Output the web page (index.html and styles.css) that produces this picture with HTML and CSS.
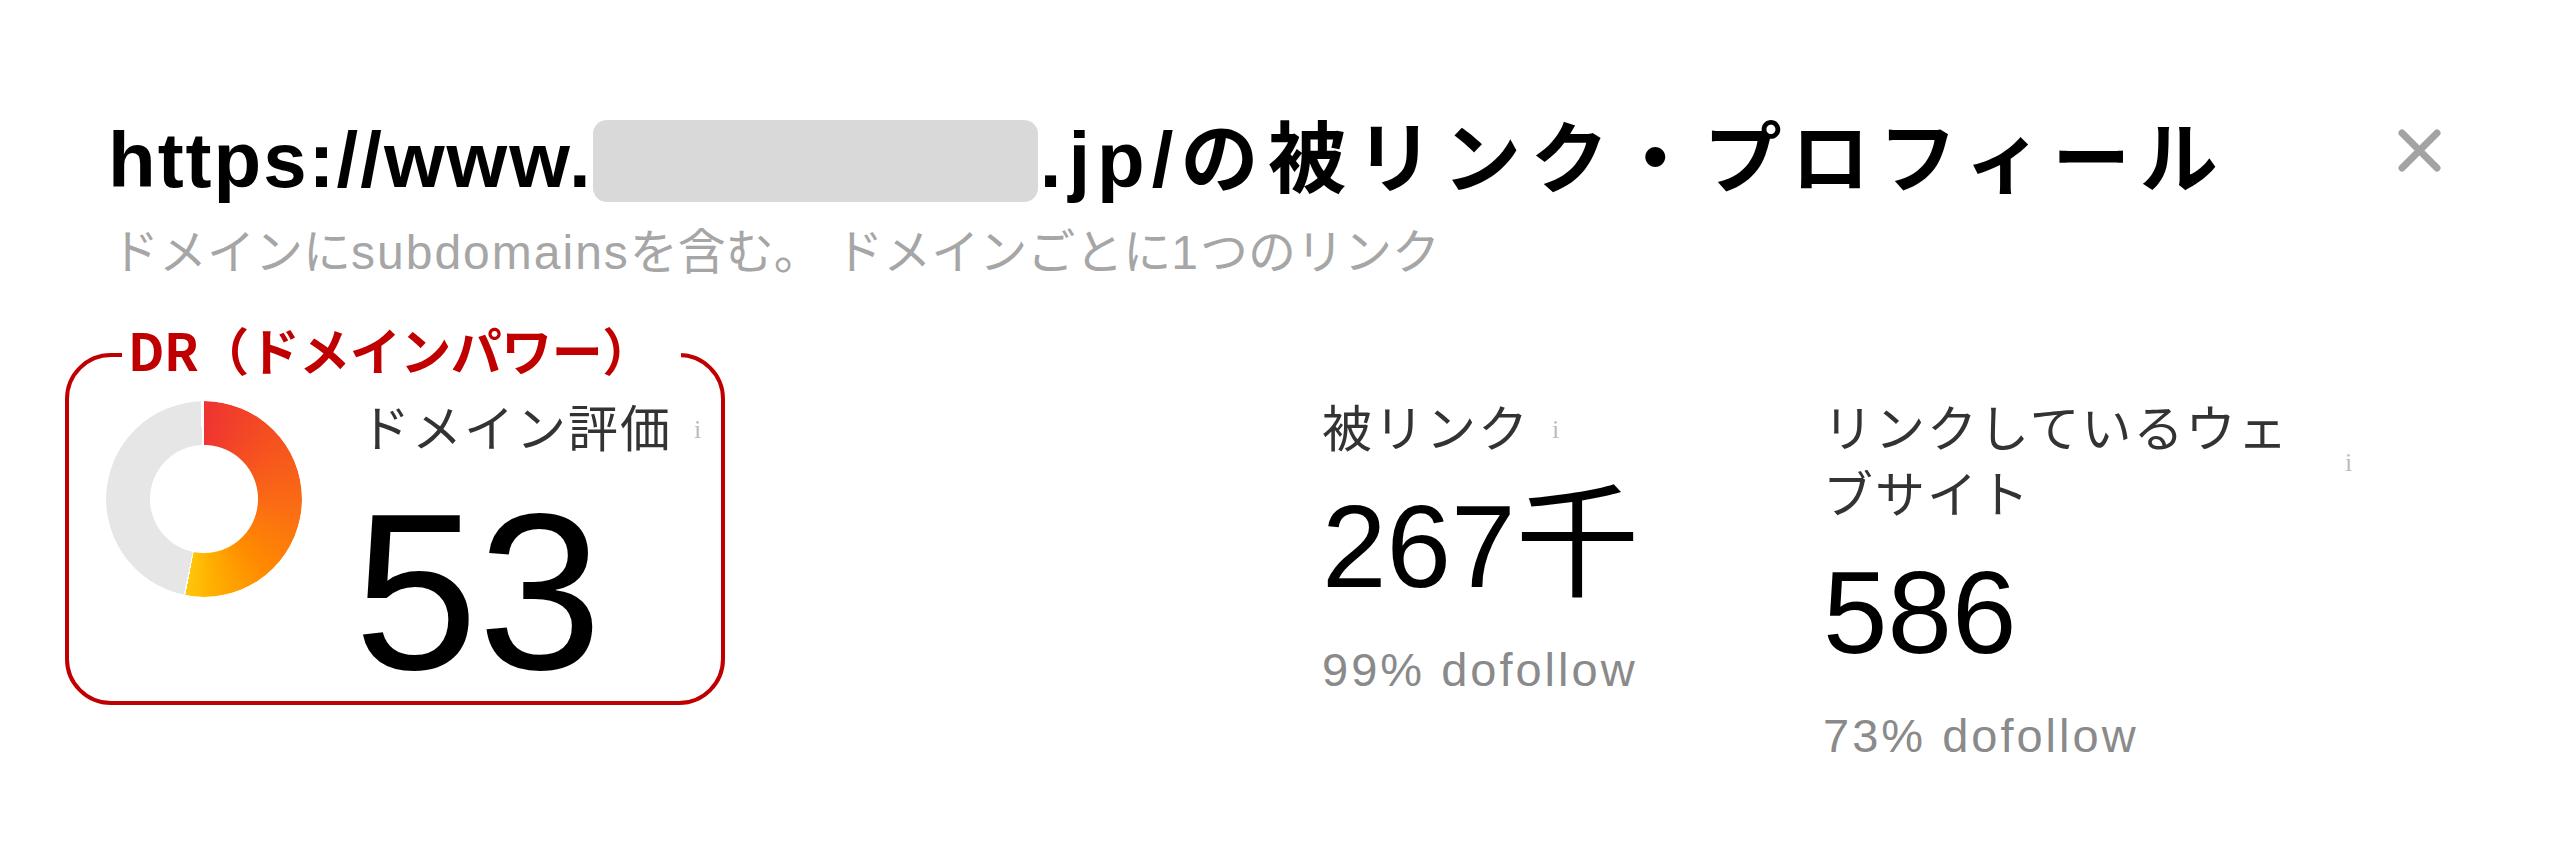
FILE: index.html
```html
<!DOCTYPE html>
<html lang="ja">
<head>
<meta charset="utf-8">
<title>被リンク・プロフィール</title>
<link rel="stylesheet" href="styles.css">
</head>
<body>
<div class="modal">
  <header class="head">
    <div class="titles">
      <h1 class="title"><span class="url">https://www.</span><span class="mask"></span><span class="url tld">.jp/</span><span class="jp">の被リンク・プロフィール</span></h1>
      <p class="sub">ドメインに<span class="lat">subdomains</span>を含む。 ドメインごとに<span class="lat">1</span>つのリンク</p>
    </div>
    <button class="close" aria-label="閉じる">
      <svg viewBox="0 0 45 45" width="45" height="45"><path d="M5 5 L40 40 M40 5 L5 40" fill="none" stroke="#a3a3a3" stroke-width="7" stroke-linecap="round"/></svg>
    </button>
  </header>
  <section class="stats">
    <div class="dr-box">
      <span class="dr-label">DR（ドメインパワー）</span>
      <div class="donut"></div>
      <div class="metric dr-metric">
        <div class="label"><span class="label-text">ドメイン評価</span><span class="info">i</span></div>
        <div class="big">53</div>
      </div>
    </div>
    <div class="metric col1">
      <div class="label"><span class="label-text">被リンク</span><span class="info">i</span></div>
      <div class="num">267<span class="unit">千</span></div>
      <div class="foot">99% dofollow</div>
    </div>
    <div class="metric col2">
      <div class="label"><span class="label-text wrap">リンクしているウェブサイト</span><span class="info">i</span></div>
      <div class="num">586</div>
      <div class="foot">73% dofollow</div>
    </div>
  </section>
</div>
</body>
</html>
```
FILE: styles.css
```css
* { box-sizing: border-box; margin: 0; padding: 0; }
html, body { background: #fff; }
body {
  width: 2560px;
  height: 853px;
  overflow: hidden;
  font-family: "Liberation Sans", "Noto Sans CJK JP", sans-serif;
  color: #000;
}
.modal { padding-top: 110px; }
.head {
  display: flex;
  justify-content: space-between;
  align-items: flex-start;
  padding: 0 118px 0 108px;
}
.title {
  font-size: 78px;
  font-weight: 700;
  line-height: 100px;
  white-space: nowrap;
}
.title .url { letter-spacing: 2px; }
.title .tld { letter-spacing: 7px; }
.title .jp { letter-spacing: 9.5px; }
.mask {
  display: inline-block;
  width: 445px;
  height: 82px;
  background: #d9d9d9;
  border-radius: 14px;
  vertical-align: -15px;
  margin: 0 2px 0 0;
}
.sub {
  font-size: 48px;
  line-height: 60px;
  color: #a6a6a6;
  margin-top: 13px;
  padding-left: 3px;
  white-space: nowrap;
}
.sub .lat { letter-spacing: 2px; }
.close {
  width: 45px;
  height: 45px;
  margin-top: 18px;
  background: none;
  border: 0;
  display: block;
}
.close svg { display: block; }

.stats {
  display: flex;
  align-items: flex-start;
  padding-left: 65px;
  margin-top: 70px;
}
.dr-box {
  position: relative;
  width: 660px;
  height: 352px;
  border: 4px solid #c00000;
  border-radius: 46px;
  display: flex;
  align-items: flex-start;
  padding: 40px 0 0 37px;
}
.dr-label {
  position: absolute;
  left: 53px;
  top: -33px;
  background: #fff;
  padding: 0 28px 0 6px;
  color: #c00000;
  font-family: "Noto Sans CJK JP", sans-serif;
  font-weight: 700;
  font-size: 51px;
  line-height: 51px;
  letter-spacing: -0.5px;
  white-space: nowrap;
}
.donut {
  width: 196px;
  height: 196px;
  margin-top: 4px;
  border-radius: 50%;
  background: conic-gradient(from 0deg,
    #ef3333 0deg, #f5521f 50deg, #fb6f12 100deg, #ff8a00 140deg, #ffb000 175deg, #ffc60a 191deg,
    #ffffff 191deg, #ffffff 192deg,
    #e6e6e6 192deg, #e6e6e6 358deg, #ffffff 358deg, #ffffff 360deg);
  -webkit-mask: radial-gradient(circle, transparent 53.5px, #000 54.5px);
  mask: radial-gradient(circle, transparent 53.5px, #000 54.5px);
  flex: none;
}
.dr-metric { margin-left: 58px; }

.label {
  display: flex;
  align-items: center;
  font-size: 50px;
  line-height: 66px;
  color: #333;
  letter-spacing: 2px;
}
.label-text { white-space: nowrap; }
.label-text.wrap { white-space: normal; width: 500px; }
.info {
  font-family: "Liberation Serif", serif;
  font-size: 26px;
  line-height: 26px;
  color: #bdbdbd;
  margin-left: 22px;
  letter-spacing: 0;
}
.big {
  font-size: 223px;
  line-height: 200px;
  margin-top: 29px;
  margin-left: -6px;
}
.col1 { margin-left: 597px; width: 501px; padding-top: 44px; }
.col2 { padding-top: 44px; }
.num {
  font-size: 116px;
  line-height: 130px;
  margin-top: 19px;
  white-space: nowrap;
}
.unit {
  font-family: "Noto Sans CJK JP", sans-serif;
  font-size: 124px;
  line-height: 0;
  font-weight: 400;
}
.foot {
  font-size: 47px;
  line-height: 56px;
  color: #8a8a8a;
  letter-spacing: 3px;
  margin-top: 30px;
  white-space: nowrap;
}
```
